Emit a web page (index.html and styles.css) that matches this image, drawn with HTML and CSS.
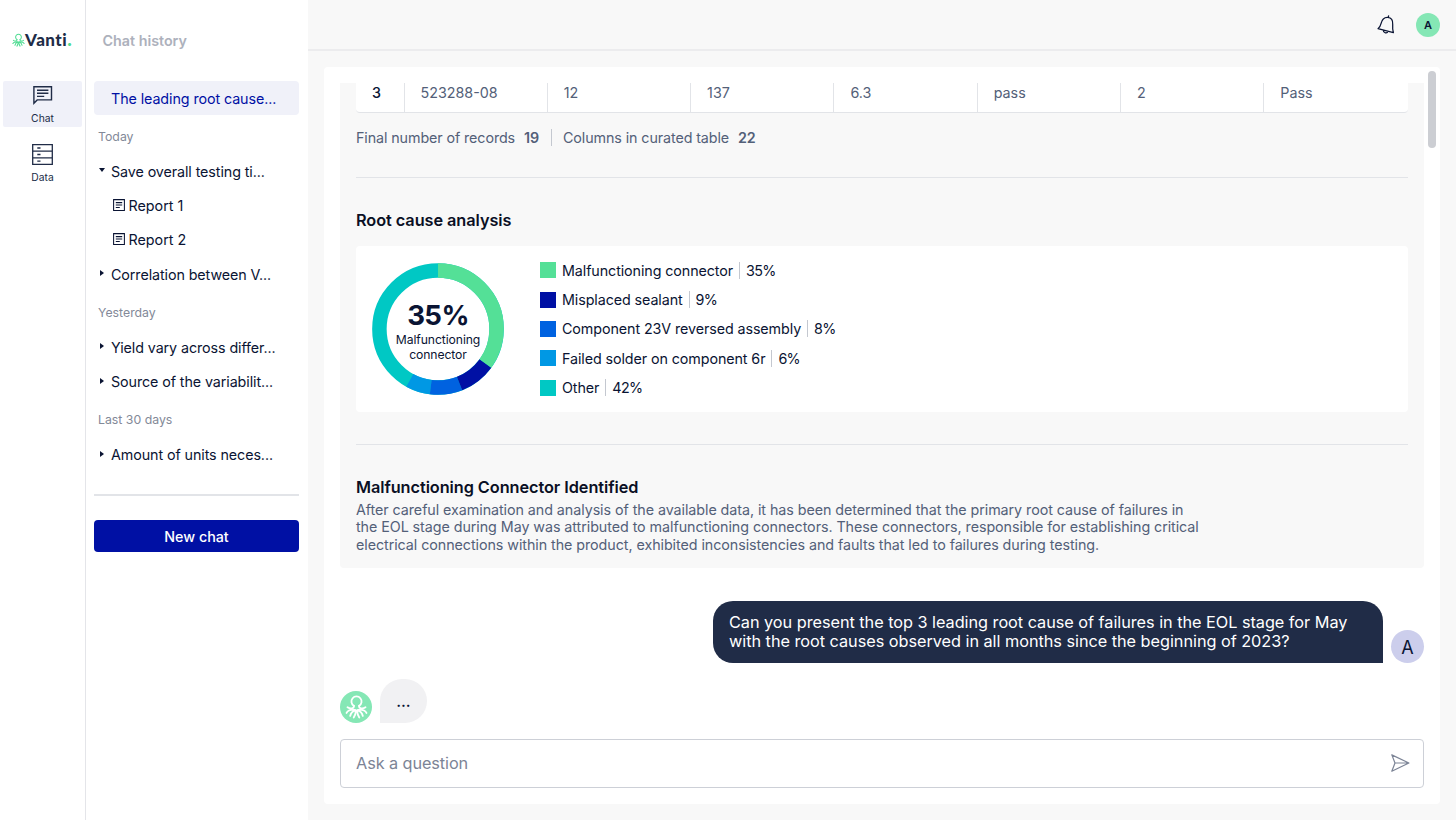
FILE: index.html
```html
<!DOCTYPE html>
<html lang="en">
<head>
<meta charset="utf-8">
<title>Vanti</title>
<link rel="stylesheet" href="styles.css">
</head>
<body>
<svg width="0" height="0" class="defs">
  <symbol id="octopus" viewBox="0 0 24 26">
    <g fill="none" stroke="currentColor" stroke-width="1.900" stroke-linecap="round" stroke-linejoin="round">
      <path d="M9.300 11.300a5.300 5.300 0 1 1 5.400 0"/>
      <path d="M9.300 11.300c.3 2.900-3.500 3.700-6.700 1.500M14.700 11.300c-.3 2.900 3.500 3.700 6.700 1.500"/>
      <path d="M10.500 15.400c-3.800-.4-7.500.4-8.900 3.300M13.500 15.400c3.800-.4 7.500.4 8.900 3.300M10.700 15.900c-3 .9-4.600 2.800-5.300 5.900M13.300 15.900c3 .9 4.600 2.800 5.300 5.900M11.500 16c-.3 3-.9 5.200-2.400 7.400M12.500 16c.3 3 .9 5.200 2.400 7.400"/>
    </g>
  </symbol>
  <symbol id="report" viewBox="0 0 12 12">
    <path d="M.6.600h10.800v10.800H.6zM2.800 3.600h6.400M2.800 6h6.400M2.800 8.400h4" fill="none" stroke="currentColor" stroke-width="1.050"/>
  </symbol>
</svg>
<div class="app">
  <nav class="rail">
    <div class="logo"><svg class="logo-mark"><use href="#octopus"/></svg><span class="logo-name">Vanti<i>.</i></span></div>
    <a class="rail-item active">
      <svg width="20" height="20" viewBox="0 0 20 20" fill="none" stroke="currentColor" stroke-width="1.400"><path d="M.9 18.200V1.700h17.600v13.200H4.200z"/><path d="M4 5.200h11.400M4 8.300h11.400M4 11.400h7.200"/></svg>
      <span>Chat</span>
    </a>
    <a class="rail-item">
      <svg width="21" height="21" viewBox="0 0 21 21" fill="none" stroke="currentColor" stroke-width="1.300"><path d="M.7.700h19.600v19.600H.7zM.7 7.200h19.600M.7 13.800h19.600M5.300 4h3.200M5.300 10.500h3.200M5.300 17.100h3.200"/></svg>
      <span>Data</span>
    </a>
  </nav>
  <aside class="history">
    <h2>Chat history</h2>
    <a class="chat current">The leading root cause...</a>
    <p class="group">Today</p>
    <a class="chat open">Save overall testing ti...</a>
    <a class="chat report"><svg width="12" height="12"><use href="#report"/></svg>Report 1</a>
    <a class="chat report"><svg width="12" height="12"><use href="#report"/></svg>Report 2</a>
    <a class="chat closed">Correlation between V...</a>
    <p class="group">Yesterday</p>
    <a class="chat closed">Yield vary across differ...</a>
    <a class="chat closed">Source of the variabilit...</a>
    <p class="group">Last 30 days</p>
    <a class="chat closed">Amount of units neces...</a>
    <hr>
    <button class="new-chat">New chat</button>
  </aside>
  <main class="main">
    <header class="topbar">
      <svg class="bell" width="18" height="20" viewBox="0 0 18 20" fill="none" stroke="currentColor" stroke-width="1.250" stroke-linejoin="round" stroke-linecap="round"><path d="M1 13.700c2-1.500 2.600-3.200 3.100-5.300C5 4.200 7.200 2.100 10.800 2.300c3.600.4 5.200 3 4.900 7.100-.2 2.800-.2 5.200.7 8.200zM11.600.900l-.3 1.400M6.300 15.300c-.1 2.800 4 3.600 4.600 1.100"/></svg>
      <span class="avatar me-small">A</span>
    </header>
    <section class="panel">
      <div class="scrollbar"></div>
      <article class="answer">
        <div class="table">
          <span class="index">3</span><span>523288-08</span><span>12</span><span>137</span><span>6.3</span><span>pass</span><span>2</span><span>Pass</span>
        </div>
        <div class="stats"><span>Final number of records</span><strong>19</strong><i></i><span>Columns in curated table</span><strong>22</strong></div>
        <hr class="first">
        <h3 class="root">Root cause analysis</h3>
        <div class="chart">
          <div class="donut">
            <svg width="132" height="132" viewBox="0 0 132 132" fill="none" stroke-width="14.500">
              <g transform="rotate(-90 66 66)">
                <circle cx="66" cy="66" r="58.600" pathLength="100" stroke="#00c8c4"/>
                <circle cx="66" cy="66" r="58.600" pathLength="100" stroke="#0098e4" stroke-dasharray="6 94" stroke-dashoffset="-52"/>
                <circle cx="66" cy="66" r="58.600" pathLength="100" stroke="#0062e0" stroke-dasharray="8 92" stroke-dashoffset="-44"/>
                <circle cx="66" cy="66" r="58.600" pathLength="100" stroke="#0010a4" stroke-dasharray="9 91" stroke-dashoffset="-35"/>
                <circle cx="66" cy="66" r="58.600" pathLength="100" stroke="#54e097" stroke-dasharray="35 65"/>
              </g>
            </svg>
            <div class="donut-label"><strong>35%</strong><span>Malfunctioning</span><span>connector</span></div>
          </div>
          <ul class="legend">
            <li class="c1"><span>Malfunctioning connector</span><em>35%</em></li>
            <li class="c2"><span>Misplaced sealant</span><em>9%</em></li>
            <li class="c3"><span>Component 23V reversed assembly</span><em>8%</em></li>
            <li class="c4"><span>Failed solder on component 6r</span><em>6%</em></li>
            <li class="c5"><span>Other</span><em>42%</em></li>
          </ul>
        </div>
        <hr class="second">
        <h3>Malfunctioning Connector Identified</h3>
        <p class="summary">After careful examination and analysis of the available data, it has been determined that the primary root cause of failures in<br>the EOL stage during May was attributed to malfunctioning connectors. These connectors, responsible for establishing critical<br>electrical connections within the product, exhibited inconsistencies and faults that led to failures during testing.</p>
      </article>
      <div class="question">
        <p>Can you present the top 3 leading root cause of failures in the EOL stage for May<br>with the root causes observed in all months since the beginning of 2023?</p>
        <span class="avatar me">A</span>
      </div>
      <div class="typing">
        <span class="avatar bot"><svg width="23" height="25"><use href="#octopus"/></svg></span>
        <p>...</p>
      </div>
      <div class="composer">
        <span>Ask a question</span>
        <svg width="20" height="20" viewBox="0 0 20 20" fill="none" stroke="currentColor" stroke-width="1.200" stroke-linejoin="round"><path d="M1.800 1.900 18.900 10 1.800 18.200 5 10zM5 10h13.500"/></svg>
      </div>
    </section>
  </main>
</div>
</body>
</html>
```
FILE: styles.css
```css
* { box-sizing: border-box; }
body { margin: 0; font-family: Inter, "Liberation Sans", sans-serif; font-size: 14.300px; letter-spacing: -.09px; color: #0a1433; background: #f8f8f8; }
h2, h3, p, ul { margin: 0; padding: 0; }
hr { margin: 0; border: 0; height: 1px; background: #e2e4e8; }
.defs { position: absolute; }
.app { display: flex; height: 820px; overflow: hidden; }

.rail { width: 86px; flex: none; background: #fff; border-right: 1px solid #e4e5e9; color: #202c47; }
.logo { display: flex; align-items: center; height: 81px; padding-left: 12px; }
.logo-mark { width: 13px; height: 15px; color: #4fdc92; }
.logo-name { font: 900 17px/20px Lato, sans-serif; letter-spacing: .5px; margin-top: -1px; }
.logo-name i { color: #4fdc92; font-style: normal; font-size: 19px; line-height: 0; }
.rail-item { display: flex; flex-direction: column; align-items: center; gap: 7px; width: 79px; height: 46px; margin: 0 0 13px 3px; padding-top: 4px; border-radius: 2px; font-size: 10.300px; line-height: 12px; letter-spacing: 0; }
.rail-item.active { background: #f0f1f9; }
.rail-item + .rail-item { gap: 6px; }

.history { width: 222px; flex: none; background: #fff; padding: 0 9px 0 8px; }
.history h2 { height: 81px; padding: 1px 0 0 8.500px; font-size: 14.300px; font-weight: 600; letter-spacing: 0; line-height: 80px; color: #adb1bc; }
.chat { position: relative; display: flex; align-items: center; height: 34.300px; padding-left: 17px; }
.chat.current { background: #f0f1f9; color: #0010a4; border-radius: 4px; }
.chat.report { padding-left: 19px; gap: 3.500px; letter-spacing: 0; }
.chat.report svg { position: relative; top: -.5px; }
.chat.open::before, .chat.closed::before { content: ""; position: absolute; left: 5px; top: 14.500px; border: 3.500px solid transparent; border-top: 4px solid #0a1433; border-bottom: 0; }
.chat.closed::before { left: 6px; top: 13.500px; border: 3.500px solid transparent; border-left: 4px solid #0a1433; border-right: 0; }
.group { height: 38.700px; padding: 2px 0 0 4px; font-size: 12.300px; letter-spacing: 0; line-height: 39px; color: #838998; }
.history hr { margin: 23px 0 24px; height: 1.500px; }
.new-chat { display: block; width: 100%; height: 32.500px; padding: 0; border: 0; border-radius: 4px; background: #0010a4; color: #fff; font: 500 14.300px Inter, sans-serif; }

.main { flex: 1; display: flex; flex-direction: column; }
.topbar { display: flex; justify-content: flex-end; align-items: center; gap: 21px; height: 51px; padding-right: 16px; border-bottom: 2px solid #ececee; }
.avatar { display: flex; align-items: center; justify-content: center; border-radius: 50%; flex: none; }
.me-small { width: 24px; height: 24px; background: #85e7b5; font-size: 11px; font-weight: 600; }

.panel { position: relative; width: 1116px; height: 737px; margin: 16px 0 0 16px; padding: 16px 16px 0; background: #fff; border-radius: 4px; }
.scrollbar { position: absolute; right: 4px; top: 4px; width: 8px; height: 77px; border-radius: 4px; background: #ccced3; }
.answer { height: 485px; padding: 0 16px; background: #f8f8f8; border-radius: 0 0 4px 4px; color: #536078; }
.table { display: grid; grid-template-columns: 47.500px repeat(7, 143.300px); height: 30px; background: #fff; border-bottom: 1px solid #e2e4e8; border-radius: 0 0 4px 4px; letter-spacing: 0; }
.table span { padding-left: 16px; line-height: 20px; border-left: 1px solid #e2e4e8; }
.table .index { border: 0; color: #0a1433; font-weight: 500; }
.stats { display: flex; align-items: center; height: 49px; letter-spacing: -.1px; }
.stats strong { font-weight: 600; margin-left: 9px; }
.stats i { width: 1px; height: 17px; margin: 0 11px 0 12px; background: #c4c8d0; }
.answer .first { margin-top: 15px; }
.answer .root { margin: 32px 0 16px; }
h3 { font-size: 16.300px; line-height: 20px; font-weight: 600; letter-spacing: -.06px; color: #0a0f24; }
.chart { display: flex; align-items: center; height: 166px; padding-left: 16px; background: #fff; border-radius: 4px; }
.donut { display: grid; width: 132px; height: 132px; }
.donut > * { grid-area: 1 / 1; }
.donut-label { display: flex; flex-direction: column; align-items: center; justify-content: center; padding-top: 2px; font-size: 12.200px; line-height: 15.300px; color: #0a1433; }
.donut-label strong { font-size: 27.600px; line-height: 34px; font-weight: 700; letter-spacing: -.6px; }
.legend { margin-left: 36px; list-style: none; color: #0a1433; }
.legend li { display: flex; align-items: center; height: 29.300px; }
.legend li::before { content: ""; width: 16px; height: 16px; margin-right: 6px; background: var(--c); }
.legend em { display: flex; align-items: center; height: 17px; margin-left: 6px; padding-left: 6px; border-left: 1px solid #c4c8d0; font-style: normal; letter-spacing: -.7px; }
.c1 { --c: #54e097; } .c2 { --c: #0010a4; } .c3 { --c: #0062e0; } .c4 { --c: #0098e4; } .c5 { --c: #00c8c4; }
.answer .second { margin: 32px 0; }
.summary { margin-top: 4px; line-height: 17.300px; white-space: nowrap; letter-spacing: -.062px; }

.question { display: flex; align-items: flex-end; justify-content: flex-end; gap: 8px; margin-top: 33px; }
.question p { width: 670px; height: 62px; padding: 12px 16px; border-radius: 20px 20px 0 20px; background: #202c47; color: #fff; font-size: 16.300px; line-height: 19px; white-space: nowrap; letter-spacing: -.04px; }
.me { width: 33px; height: 33px; padding-top: 2px; background: #ccceec; font-size: 18px; }
.typing { display: flex; align-items: flex-end; gap: 8px; margin-top: 16px; }
.bot { width: 32px; height: 32px; background: #85e7b5; color: #fff; }
.typing p { width: 47px; height: 44px; border-radius: 22px 22px 22px 0; background: #f1f1f3; text-align: center; font-size: 16px; line-height: 44px; font-weight: 500; }
.composer { display: flex; align-items: center; justify-content: space-between; height: 49px; margin-top: 16px; padding: 0 13.500px 1px 15px; border: 1px solid #cdd0d7; border-radius: 4px; font-size: 16.300px; color: #7c8496; }
```
